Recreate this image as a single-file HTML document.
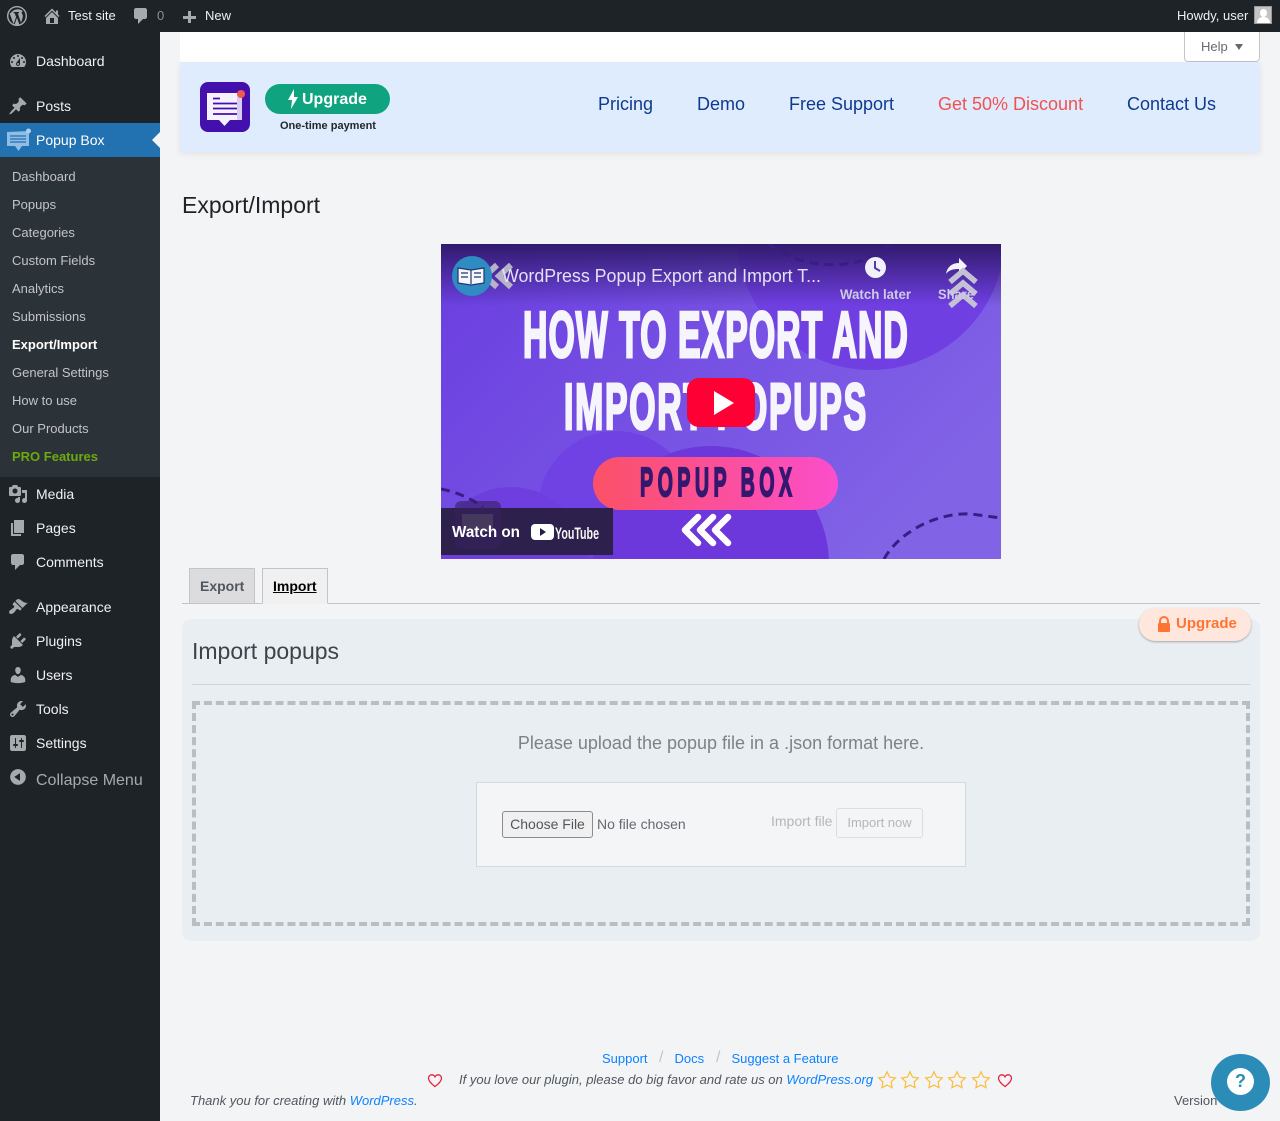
<!DOCTYPE html>
<html lang="en"><head><meta charset="utf-8"><title>Export/Import</title>
<style>
*{box-sizing:border-box}
html,body{margin:0;padding:0;width:1280px;height:1121px;overflow:hidden;background:#f3f4f6;font-family:"Liberation Sans",sans-serif;font-size:13px;color:#3c434a}
.a{position:absolute}
.t{position:absolute;white-space:nowrap;line-height:20px}
.m{color:#f0f0f1;font-size:14px;left:36px}
.s{color:#c3c4c7;font-size:13px;left:12px}
svg.i{position:absolute;width:20px;height:20px;fill:#a7aaad}
.n{color:#0f3a8e;font-size:18px;top:94px}
.l{color:#0d82ff}
</style></head><body>

<!-- admin bar -->
<div class="a" style="left:0;top:0;width:1280px;height:32px;background:#1d2327"></div>
<svg class="a" style="left:6px;top:5px" width="22" height="22" viewBox="0 0 22 22"><circle cx="11" cy="11" r="9.3" fill="none" stroke="#a7aaad" stroke-width="1.4"/><path d="M3.600 7.800c1 3.800 2.900 8.600 4.100 11.200l2.400-7-1.400-3.800-1.100-.1V7h5.400v1.100l-1.200.1 3.200 9.600 1.100-3.600c.6-2 .9-2.800.6-4-.3-1.300-1.300-1.900-1-3 .2-.7.8-1 1.400-1-1.700-1.300-3.400-2-5.200-2-3 0-5.500 1.500-7.200 3.900zM11 12.800l-2.500 7c1.600.5 3.300.4 4.900-.1z" fill="#a7aaad"/></svg>
<svg class="i" style="left:42px;top:6px" viewBox="0 0 20 20"><path d="M16 8.500l1.530 1.530-1.060 1.060L10 4.620l-6.470 6.470-1.060-1.060L10 2.500l4 4v-2h2v4zm-6-2.460l6 5.990V18H4v-5.970zM12 17v-5H8v5h4z"/></svg>
<div class="t" style="left:68px;top:6px;color:#f0f0f1">Test site</div>
<svg class="i" style="left:131px;top:6px" viewBox="0 0 20 20"><path d="M5 2h9c1.100 0 2 .9 2 2v7c0 1.100-.9 2-2 2h-2l-5 5v-5H5c-1.100 0-2-.9-2-2V4c0-1.100.9-2 2-2z"/></svg>
<div class="t" style="left:157px;top:6px;color:#8c8f94">0</div>
<svg class="i" style="left:179px;top:7px" viewBox="0 0 20 20"><path d="M9 4h3v5h5v3h-5v4H9v-4H4V9h5z"/></svg>
<div class="t" style="left:205px;top:6px;color:#f0f0f1">New</div>
<div class="t" style="left:1177px;top:6px;color:#f0f0f1">Howdy, user</div>
<div class="a" style="left:1254px;top:6px;width:18px;height:18px;background:#c4c4c4;border:1px solid #9a9a9a;overflow:hidden"><div class="a" style="left:5px;top:2px;width:7px;height:8px;border-radius:50%;background:#fff"></div><div class="a" style="left:2px;top:10px;width:13px;height:8px;border-radius:6px 6px 0 0;background:#fff"></div></div>

<!-- sidebar -->
<div class="a" style="left:0;top:32px;width:160px;height:1089px;background:#1d2327"></div>
<div class="a" style="left:0;top:123px;width:160px;height:34px;background:#2271b1"></div>
<div class="a" style="left:0;top:157px;width:160px;height:320px;background:#2c3338"></div>
<div class="a" style="left:152px;top:132px;width:0;height:0;border:8px solid transparent;border-left:0;border-right-color:#f3f4f6"></div>

<svg class="i" style="left:8px;top:51px" viewBox="0 0 20 20"><path d="M3.760 16h12.480c1.100-1.370 1.760-3.110 1.760-5 0-4.420-3.580-8-8-8s-8 3.580-8 8c0 1.890.66 3.630 1.760 5zM10 4c.55 0 1 .45 1 1s-.45 1-1 1-1-.45-1-1 .45-1 1-1zM6 6c.55 0 1 .45 1 1s-.45 1-1 1-1-.45-1-1 .45-1 1-1zm8 0c.55 0 1 .45 1 1s-.45 1-1 1-1-.45-1-1 .45-1 1-1zm-5.370 5.550L12 7v6c0 1.100-.9 2-2 2s-2-.9-2-2c0-.57.24-1.080.63-1.450zM4 10c.55 0 1 .45 1 1s-.45 1-1 1-1-.45-1-1 .45-1 1-1zm12 0c.55 0 1 .45 1 1s-.45 1-1 1-1-.45-1-1 .45-1 1-1zm-5 3c0-.55-.45-1-1-1s-1 .45-1 1 .45 1 1 1 1-.45 1-1z"/></svg>
<div class="t m" style="top:51px">Dashboard</div>
<svg class="i" style="left:8px;top:96px" viewBox="0 0 20 20"><path d="M10.440 3.020l1.820-1.820 6.360 6.350-1.830 1.820c-1.050-.68-2.480-.57-3.410.36l-.75.75c-.92.93-1.040 2.350-.35 3.410l-1.830 1.820-2.410-2.410-2.800 2.790c-.42.42-3.380 2.710-3.800 2.290s1.860-3.390 2.280-3.810l2.790-2.790L4.100 9.360l1.830-1.820c1.050.69 2.480.57 3.400-.36l.75-.75c.93-.92 1.050-2.350.36-3.410z"/></svg>
<div class="t m" style="top:96px">Posts</div>
<svg class="a" style="left:6px;top:128px" width="25" height="24" viewBox="0 0 25 24"><path d="M1 4l22-1v15h-7l-3.500 5-3.500-5H1z" fill="#8fbde6"/><path d="M4 8h16M4 11h16M4 14h16" stroke="#2271b1" stroke-width="1.200"/><circle cx="22.500" cy="3" r="2.500" fill="#a9cdec"/></svg>
<div class="t m" style="top:130px;color:#fff">Popup Box</div>

<div class="t s" style="top:167px">Dashboard</div>
<div class="t s" style="top:195px">Popups</div>
<div class="t s" style="top:223px">Categories</div>
<div class="t s" style="top:251px">Custom Fields</div>
<div class="t s" style="top:279px">Analytics</div>
<div class="t s" style="top:307px">Submissions</div>
<div class="t s" style="top:335px;color:#fff;font-weight:700">Export/Import</div>
<div class="t s" style="top:363px">General Settings</div>
<div class="t s" style="top:391px">How to use</div>
<div class="t s" style="top:419px">Our Products</div>
<div class="t s" style="top:447px;color:#6bab0e;font-weight:700">PRO Features</div>

<svg class="i" style="left:8px;top:484px" viewBox="0 0 20 20"><path d="M13 11V4c0-.55-.45-1-1-1h-1.670L9 1H5L3.670 3H2c-.55 0-1 .45-1 1v7c0 .55.45 1 1 1h10c.55 0 1-.45 1-1zM7 4.500c1.380 0 2.500 1.120 2.500 2.500S8.380 9.500 7 9.500 4.500 8.380 4.500 7 5.620 4.500 7 4.500zM14 6h5v10.500c0 1.380-1.120 2.500-2.500 2.500S14 17.880 14 16.500s1.120-2.500 2.500-2.500c.17 0 .34.02.5.05V9h-3V6zm-4 8.050V13h2v3.500c0 1.380-1.120 2.500-2.500 2.500S7 17.880 7 16.500 8.120 14 9.500 14c.17 0 .34.02.5.05z"/></svg>
<div class="t m" style="top:484px">Media</div>
<svg class="i" style="left:8px;top:518px" viewBox="0 0 20 20"><path d="M6 15V2h10v13H6zm-1 1h8v2H3V5h2v11z"/></svg>
<div class="t m" style="top:518px">Pages</div>
<svg class="i" style="left:8px;top:552px" viewBox="0 0 20 20"><path d="M5 2h9c1.100 0 2 .9 2 2v7c0 1.100-.9 2-2 2h-2l-5 5v-5H5c-1.100 0-2-.9-2-2V4c0-1.100.9-2 2-2z"/></svg>
<div class="t m" style="top:552px">Comments</div>
<svg class="i" style="left:8px;top:597px" viewBox="0 0 20 20"><path d="M14.480 11.060L7.410 3.990l1.500-1.500c.5-.56 2.300-.47 3.510.32 1.210.8 1.430 1.280 2.910 2.100 1.180.64 2.450 1.260 4.450.85zm-.71.71L6.700 4.700 4.930 6.470c-.39.39-.39 1.020 0 1.410l1.060 1.060c.39.39.39 1.030 0 1.420-.6.6-1.430 1.110-2.210 1.690-.35.26-.7.53-1.010.84C1.430 13.230.4 15.210 1.640 16.460c1.250 1.250 3.230.22 4.570-1.120.31-.31.58-.66.84-1.010.58-.78 1.090-1.610 1.690-2.210.39-.39 1.030-.39 1.420 0l1.060 1.060c.39.39 1.020.39 1.410 0z"/></svg>
<div class="t m" style="top:597px">Appearance</div>
<svg class="i" style="left:8px;top:631px" viewBox="0 0 20 20"><path d="M13.110 4.360L9.870 7.600 8 5.730l3.240-3.240c.35-.34 1.050-.2 1.560.32.52.51.66 1.210.31 1.550zm-8 1.770l.91-1.120 9.010 9.010-1.190.84c-.71.71-2.630 1.160-3.820 1.160H6.140L4.900 17.260c-.59.59-1.540.59-2.120 0-.59-.58-.59-1.530 0-2.120l1.240-1.240v-3.880c0-1.130.4-3.190 1.090-3.890zm7.260 3.970l3.240-3.240c.34-.35 1.040-.21 1.550.31.52.51.66 1.210.31 1.550l-3.240 3.250z"/></svg>
<div class="t m" style="top:631px">Plugins</div>
<svg class="i" style="left:8px;top:665px" viewBox="0 0 20 20"><path d="M10 9.250c-2.270 0-2.730-3.440-2.730-3.440C7 4.020 7.820 2 9.970 2c2.160 0 2.980 2.020 2.710 3.810 0 0-.41 3.440-2.680 3.440zm0 2.570L12.720 10c2.390 0 4.520 2.330 4.520 4.530v2.490s-3.650 1.130-7.240 1.130c-3.650 0-7.240-1.130-7.240-1.130v-2.490c0-2.250 1.940-4.480 4.470-4.480z"/></svg>
<div class="t m" style="top:665px">Users</div>
<svg class="i" style="left:8px;top:699px" viewBox="0 0 20 20"><path d="M16.680 9.770c-1.340 1.340-3.300 1.670-4.950.99l-5.410 6.520c-.99.99-2.590.99-3.580 0s-.99-2.590 0-3.570l6.520-5.420c-.68-1.650-.35-3.610.99-4.950 1.280-1.280 3.120-1.620 4.720-1.060l-2.890 2.890 2.820 2.820 2.860-2.870c.53 1.580.18 3.390-1.080 4.650zM3.810 16.210c.4.39 1.040.39 1.430 0 .4-.4.4-1.040 0-1.430-.39-.4-1.030-.4-1.430 0-.39.39-.39 1.030 0 1.430z"/></svg>
<div class="t m" style="top:699px">Tools</div>
<svg class="i" style="left:8px;top:733px" viewBox="0 0 20 20"><path d="M18 16V4c0-1.100-.9-2-2-2H4c-1.100 0-2 .9-2 2v12c0 1.100.9 2 2 2h12c1.100 0 2-.9 2-2zM8 11h1c.55 0 1 .45 1 1s-.45 1-1 1H8v1.500c0 .28-.22.5-.5.5s-.5-.22-.5-.5V13H6c-.55 0-1-.45-1-1s.45-1 1-1h1V5.500c0-.28.22-.5.5-.5s.5.22.5.5V11zm5-2h-1c-.55 0-1-.45-1-1s.45-1 1-1h1V5.500c0-.28.22-.5.5-.5s.5.22.5.5V7h1c.55 0 1 .45 1 1s-.45 1-1 1h-1v5.500c0 .28-.22.5-.5.5s-.5-.22-.5-.5V9z"/></svg>
<div class="t m" style="top:733px">Settings</div>
<svg class="i" style="left:8px;top:767px" viewBox="0 0 20 20"><path d="M10 2.160c4.330 0 7.840 3.510 7.840 7.840s-3.510 7.840-7.840 7.840S2.160 14.330 2.160 10 5.710 2.160 10 2.160zm2 11.720V6.120L6.180 9.970z"/></svg>
<div class="t" style="left:36px;top:771px;font-size:16px;color:#a7aaad">Collapse Menu</div>

<!-- header -->
<div class="a" style="left:180px;top:32px;width:1080px;height:30px;background:#fff"></div>
<div class="a" style="left:1184px;top:32px;width:76px;height:30px;background:#fff;border:1px solid #c3c4c7;border-top:0;border-radius:0 0 4px 4px"></div>
<div class="t" style="left:1201px;top:37px;color:#646970">Help</div>
<div class="a" style="left:1235px;top:44px;width:0;height:0;border:4px solid transparent;border-top:6px solid #646970;border-bottom:0"></div>
<div class="a" style="left:180px;top:62px;width:1080px;height:90px;background:#dfecfe;box-shadow:0 2px 6px rgba(0,0,0,.07)"></div>
<svg class="a" style="left:200px;top:82px" width="50" height="50" viewBox="0 0 50 50"><rect width="50" height="50" rx="8" fill="#4410ad"/><path d="M7 11h35v27H30l-5.500 6-5.500-6H7z" fill="#f6f2fd"/><path d="M37 11h5v27h-5z" fill="#d9cdf0"/><path d="M13 16.500h7M13 21.500h24M13 26.500h24M13 32h24" stroke="#4410ad" stroke-width="1.800"/><circle cx="41" cy="12" r="4" fill="#f0594e"/></svg>
<div class="a" style="left:265px;top:84px;width:125px;height:30px;border-radius:15px;background:#10a37f"></div>
<svg class="a" style="left:287px;top:89px" width="12" height="20" viewBox="0 0 12 20"><path d="M7 0L1 11h4l-1 9 7-12H7z" fill="#fff"/></svg>
<div class="t" style="left:302px;top:90px;color:#fff;font-weight:700;font-size:16px">Upgrade</div>
<div class="t" style="left:280px;top:116px;font-size:11px;font-weight:700;color:#23272b">One-time payment</div>
<div class="t n" style="left:598px">Pricing</div>
<div class="t n" style="left:697px">Demo</div>
<div class="t n" style="left:789px">Free Support</div>
<div class="t n" style="left:938px;color:#ef5350">Get 50% Discount</div>
<div class="t n" style="left:1127px">Contact Us</div>

<div class="t" style="left:182px;top:195px;font-size:23px;color:#1d2327">Export/Import</div>

<!-- video -->
<svg class="a" style="left:441px;top:244px" width="560" height="315" viewBox="0 0 560 315" font-family="Liberation Sans, sans-serif">
<defs>
<linearGradient id="bg" x1="0" y1="0" x2="1" y2=".55"><stop offset="0" stop-color="#6a3de0"/><stop offset="1" stop-color="#8163e6"/></linearGradient>
<linearGradient id="top" x1="0" y1="0" x2="0" y2="1"><stop offset="0" stop-color="#2a1660" stop-opacity=".9"/><stop offset="1" stop-color="#2a1660" stop-opacity="0"/></linearGradient>
<linearGradient id="pill" x1="0" y1="0" x2="1" y2="0"><stop offset="0" stop-color="#fb5166"/><stop offset="1" stop-color="#fb4ecb"/></linearGradient>
</defs>
<rect width="560" height="315" fill="url(#bg)"/>
<circle cx="430" cy="-8" r="134" fill="#6f3fe2"/>
<circle cx="175" cy="265" r="78" fill="#7142e3"/>
<circle cx="270" cy="320" r="118" fill="#6c38dc"/>
<circle cx="70" cy="320" r="77" fill="#6e3ede"/>
<rect width="560" height="62" fill="url(#top)"/>
<path d="M328 0c30 25 90 30 122 0" fill="none" stroke="#3a1c85" stroke-width="3" stroke-dasharray="9 6"/>
<path d="M443 315C460 285 500 268 530 270L560 274" fill="none" stroke="#3a1c85" stroke-width="3" stroke-dasharray="9 6"/>
<path d="M0 245c10 2 25 6 42 18" fill="none" stroke="#3a1c85" stroke-width="3" stroke-dasharray="9 6"/>
<path d="M56 21l-12 11 12 11M70 21l-12 11 12 11" fill="none" stroke="#b6b3c6" stroke-width="6"/>
<circle cx="31" cy="32" r="20" fill="#2e8cc2"/>
<path d="M17 24l13 2 13-2v15l-13 2-13-2z" fill="#f3f7fb" stroke="#24356b" stroke-width="1.200"/><path d="M30 26v14M20 29h7M20 33h7M33 29h7M33 33h7" stroke="#24356b" stroke-width="1.200"/>
<text x="61" y="38" font-size="18" fill="#e4e1f4" textLength="319" lengthAdjust="spacingAndGlyphs">WordPress Popup Export and Import T...</text>
<circle cx="434.500" cy="23.500" r="10.500" fill="#f2f0fa"/><path d="M434 17v7l5 3" fill="none" stroke="#5a3aa8" stroke-width="2"/>
<text x="434.500" y="55" font-size="14" font-weight="700" text-anchor="middle" fill="#cfcae6" textLength="71" lengthAdjust="spacingAndGlyphs">Watch later</text>
<path d="M505 30c1-7 6-11 13-11v-5l8 8-8 8v-5c-6 0-10 1-13 5z" fill="#f4f2fb"/>
<path d="M509 38l13-11 13 11M509 50l13-11 13 11M509 62l13-11 13 11" fill="none" stroke="#c5c1d4" stroke-width="5.500"/>
<text x="497" y="55" font-size="14" font-weight="700" fill="#cfcae6" textLength="36" lengthAdjust="spacingAndGlyphs">Share</text>
<g font-weight="700" fill="#f6f5fb" stroke="#f6f5fb" stroke-width="3">
<text transform="translate(82,113) scale(.52,1)" font-size="65" textLength="740" lengthAdjust="spacing">HOW TO EXPORT AND</text>
<text transform="translate(123,185) scale(.52,1)" font-size="65" textLength="581" lengthAdjust="spacing">IMPORT POPUPS</text>
</g>
<rect x="152" y="213" width="245" height="53" rx="26.500" fill="url(#pill)"/>
<text transform="translate(199,252) scale(.48,1)" font-size="41" font-weight="700" fill="#34186f" stroke="#34186f" stroke-width="2" textLength="317" lengthAdjust="spacing">POPUP BOX</text>
<path d="M257 273l-13 13 13 13M272 273l-13 13 13 13M287 273l-13 13 13 13" fill="none" stroke="#fff" stroke-width="6.500" stroke-linecap="round" stroke-linejoin="round"/>
<rect x="246" y="134" width="68" height="49" rx="12" fill="#fe0033"/>
<path d="M273 147v24l20-12z" fill="#fff"/>
<rect x="0" y="264" width="172" height="47" fill="#281e42" opacity=".93"/>
<rect x="14" y="257" width="46" height="48" rx="6" fill="#36225f" opacity=".6"/>
<path d="M21 270h31v18H21z" fill="#4b4560" opacity=".7"/>
<text x="11" y="293" font-size="16" font-weight="700" fill="#fff" textLength="68" lengthAdjust="spacingAndGlyphs">Watch on</text>
<rect x="90" y="280" width="23" height="16" rx="4" fill="#fff"/><path d="M99 284v8l6-4z" fill="#281e42"/>
<text x="114" y="295" font-size="17" font-weight="700" fill="#f5f5f5" textLength="44" lengthAdjust="spacingAndGlyphs">YouTube</text>
</svg>

<!-- tabs -->
<div class="a" style="left:182px;top:603px;width:1078px;height:1px;background:#c3c4c7"></div>
<div class="a" style="left:189px;top:568px;width:66px;height:36px;background:#dcdcde;border:1px solid #c3c4c7;border-bottom:1px solid #c3c4c7"></div>
<div class="t" style="left:200px;top:576px;font-size:14px;font-weight:700;color:#50575e">Export</div>
<div class="a" style="left:262px;top:568px;width:66px;height:36px;background:#f0f0f1;border:1px solid #c3c4c7;border-bottom:1px solid #f0f0f1"></div>
<div class="t" style="left:273px;top:576px;font-size:14px;font-weight:700;color:#000;text-decoration:underline">Import</div>

<!-- card -->
<div class="a" style="left:182px;top:619px;width:1078px;height:322px;background:#e9eef2;border-radius:10px"></div>
<div class="t" style="left:192px;top:641px;font-size:23px;color:#3c434a">Import popups</div>
<div class="a" style="left:192px;top:684px;width:1058px;height:1px;background:#cfd4d8"></div>
<div class="a" style="left:1139px;top:608px;width:112px;height:33px;background:#ffe7de;border-radius:17px;box-shadow:0 1px 2px rgba(0,0,0,.3)"></div>
<svg class="a" style="left:1157px;top:616px" width="14" height="16" viewBox="0 0 14 16"><path d="M3 7V5a4 4 0 0 1 8 0v2" fill="none" stroke="#ff7433" stroke-width="2"/><rect x="1" y="7" width="12" height="9" rx="1" fill="#ff7433"/></svg>
<div class="t" style="left:1176px;top:614px;font-size:15px;font-weight:700;color:#ff7433">Upgrade</div>
<div class="a" style="left:192px;top:701px;width:1058px;height:225px;border:4px dashed #b8bfc4"></div>
<div class="t" style="left:192px;width:1058px;text-align:center;top:733px;font-size:18px;color:#7c8287">Please upload the popup file in a .json format here.</div>
<div class="a" style="left:476px;top:782px;width:490px;height:85px;background:#f3f5f7;border:1px solid #d3dade"></div>
<div class="a" style="left:502px;top:811px;width:91px;height:27px;background:#f0f0f0;border:1px solid #8a8c8e;border-radius:3px;font-size:14px;line-height:25px;text-align:center;color:#50575e">Choose File</div>
<div class="t" style="left:597px;top:814px;font-size:14px;color:#646970">No file chosen</div>
<div class="t" style="left:771px;top:811px;font-size:14px;color:#b4b7ba">Import file</div>
<div class="a" style="left:836px;top:808px;width:87px;height:30px;border:1px solid #dcdfe1;border-radius:3px;background:#f3f5f7;font-size:13px;line-height:28px;text-align:center;color:#b4b7ba">Import now</div>

<!-- footer -->
<div class="t l" style="left:602px;top:1049px">Support</div>
<div class="t" style="left:659px;top:1048px;color:#c3c4c7;font-size:16px">/</div>
<div class="t l" style="left:674.500px;top:1049px">Docs</div>
<div class="t" style="left:716px;top:1048px;color:#c3c4c7;font-size:16px">/</div>
<div class="t l" style="left:731.500px;top:1049px">Suggest a Feature</div>
<svg class="a" style="left:427px;top:1073px" width="16" height="15" viewBox="0 0 16 15"><path d="M8 13.500C4 10.500 1.500 8 1.500 5.200 1.500 3 3.200 1.800 4.800 1.800c1.300 0 2.500.7 3.200 2 .7-1.300 1.900-2 3.200-2 1.600 0 3.300 1.200 3.300 3.400C14.500 8 12 10.500 8 13.500z" fill="none" stroke="#ee1c3e" stroke-width="1.300"/></svg>
<div class="t" style="left:459px;top:1070px;font-style:italic;color:#50575e">If you love our plugin, please do big favor and rate us on <span class="l">WordPress.org</span></div>
<svg class="a" style="left:877px;top:1070px" width="116" height="20" viewBox="0 0 116 20"><defs><path id="st" d="M10 1.800l2.500 5.300 5.800.8-4.200 4 1 5.800L10 15.100l-5.100 2.600 1-5.800-4.200-4 5.800-.8z" fill="none" stroke="#fbbd3b" stroke-width="1.200"/></defs><use href="#st"/><use href="#st" x="23"/><use href="#st" x="47"/><use href="#st" x="70"/><use href="#st" x="94"/></svg>
<svg class="a" style="left:997px;top:1073px" width="16" height="15" viewBox="0 0 16 15"><path d="M8 13.500C4 10.500 1.500 8 1.500 5.200 1.500 3 3.200 1.800 4.800 1.800c1.300 0 2.500.7 3.200 2 .7-1.300 1.900-2 3.200-2 1.600 0 3.300 1.200 3.300 3.400C14.500 8 12 10.500 8 13.500z" fill="none" stroke="#ee1c3e" stroke-width="1.300"/></svg>
<div class="t" style="left:190px;top:1091px;font-style:italic;color:#50575e">Thank you for creating with <span class="l">WordPress</span>.</div>
<div class="t" style="left:1174px;top:1091px;color:#50575e">Version</div>
<div class="a" style="left:1211px;top:1054px;width:59px;height:57px;border-radius:50%;background:#2a8cb7"></div>
<div class="a" style="left:1227px;top:1068px;width:27px;height:27px;border-radius:50%;background:#fff;color:#2a8cb7;font-size:18px;font-weight:700;line-height:27px;text-align:center">?</div>
</body></html>
